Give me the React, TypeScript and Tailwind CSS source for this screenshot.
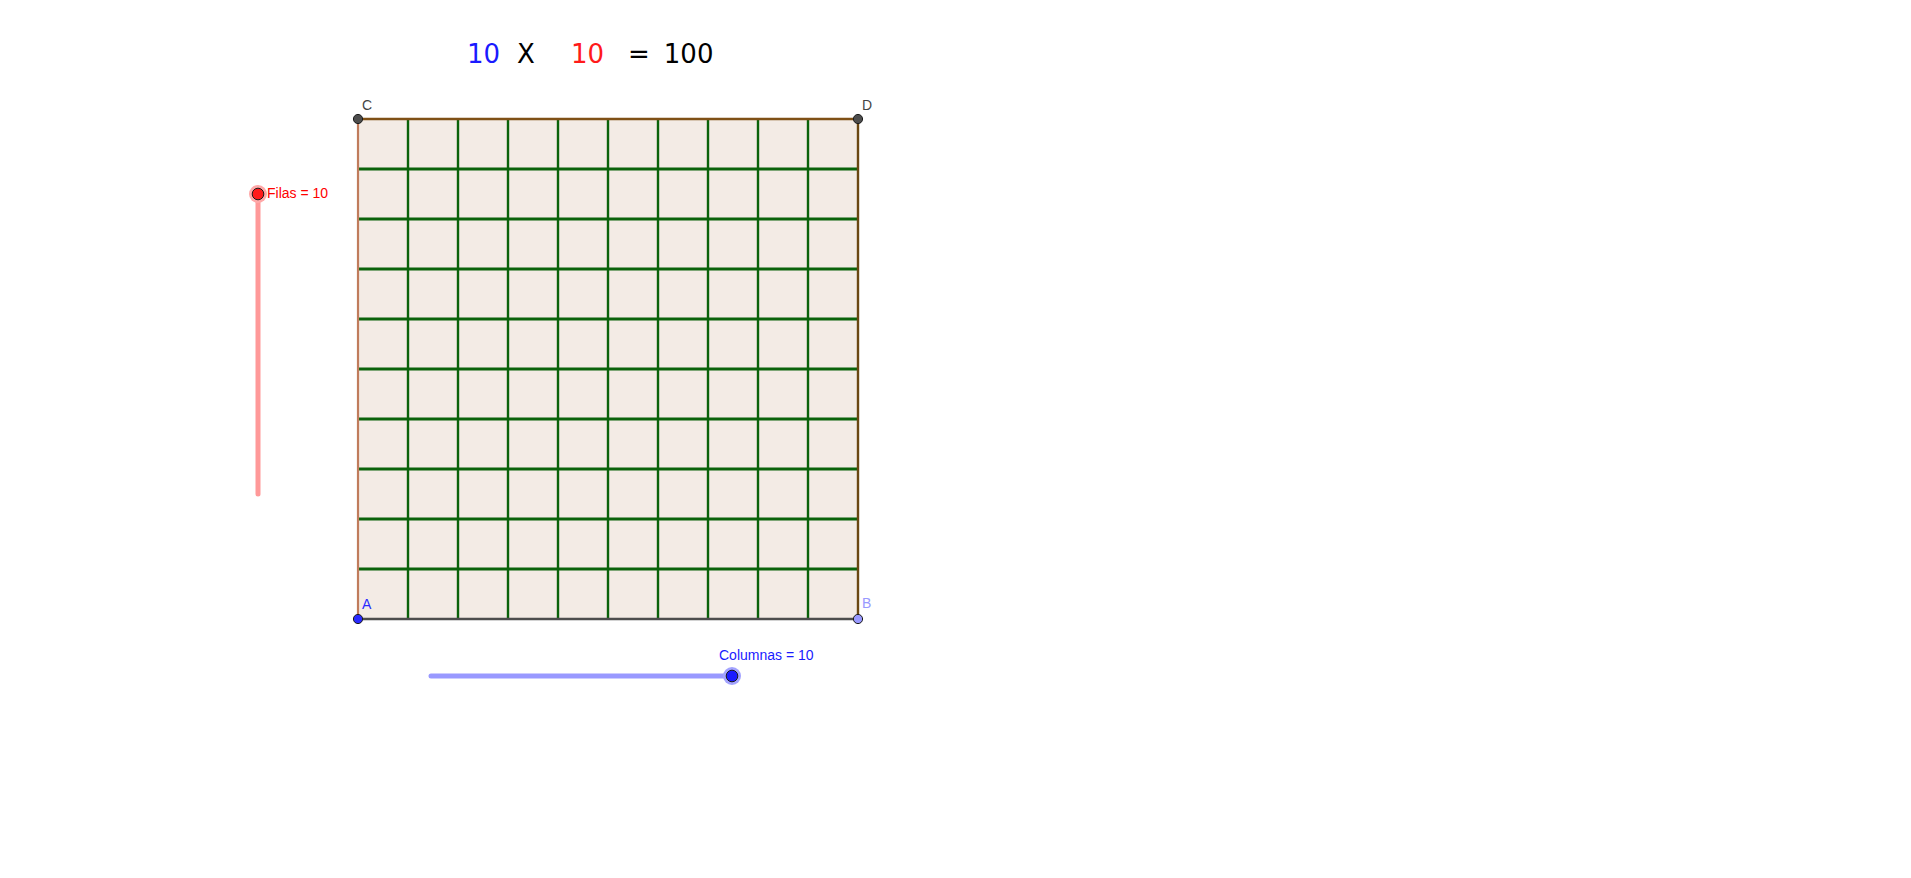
const ROWS = 10;
const COLS = 10;
const LEFT = 358;
const TOP = 119;
const CELL = 50;

function Point({ x, y, fill }: { x: number; y: number; fill: string }) {
  return <circle cx={x} cy={y} r={4.6} fill={fill} stroke="#1a1a1a" strokeWidth={1} />;
}

function Knob({ x, y, halo, fill }: { x: number; y: number; halo: string; fill: string }) {
  return (
    <g>
      <circle cx={x} cy={y} r={9} fill={halo} />
      <circle cx={x} cy={y} r={5.8} fill={fill} stroke="#1a1a1a" strokeWidth={1} />
    </g>
  );
}

function Board() {
  const right = LEFT + COLS * CELL;
  const bottom = TOP + ROWS * CELL;

  return (
    <svg width={1911} height={878} className="block">
      <rect x={LEFT} y={TOP} width={COLS * CELL} height={ROWS * CELL} fill="#f3ebe5" />

      {/* rows */}
      {Array.from({ length: ROWS - 1 }, (_, i) => (
        <line
          key={`r${i}`}
          x1={LEFT}
          x2={right}
          y1={TOP + (i + 1) * CELL}
          y2={TOP + (i + 1) * CELL}
          stroke="#0a620a"
          strokeWidth={2.8}
        />
      ))}

      {/* columns */}
      {Array.from({ length: COLS - 1 }, (_, i) => (
        <line
          key={`c${i}`}
          x1={LEFT + (i + 1) * CELL}
          x2={LEFT + (i + 1) * CELL}
          y1={TOP}
          y2={bottom}
          stroke="#0a620a"
          strokeWidth={2.4}
        />
      ))}

      {/* polygon edges */}
      <line x1={LEFT} x2={LEFT} y1={TOP} y2={bottom} stroke="#c07c5c" strokeWidth={2.2} />
      <line x1={right} x2={right} y1={TOP} y2={bottom} stroke="#6a4712" strokeWidth={2.4} />
      <line x1={LEFT} x2={right} y1={TOP} y2={TOP} stroke="#7f5016" strokeWidth={2.6} />
      <line x1={LEFT} x2={right} y1={bottom} y2={bottom} stroke="#4d4d4d" strokeWidth={2.6} />

      <Point x={LEFT} y={TOP} fill="#4d4d4d" />
      <Point x={right} y={TOP} fill="#4d4d4d" />
      <Point x={LEFT} y={bottom} fill="#2a2aff" />
      <Point x={right} y={bottom} fill="#9999ff" />

      {/* Filas slider */}
      <line x1={258} x2={258} y1={194} y2={494} stroke="#ff9999" strokeWidth={5} strokeLinecap="round" />
      <Knob x={258} y={194} halo="#ffa8a8" fill="#ff1a1a" />

      {/* Columnas slider */}
      <line x1={431} x2={732} y1={676} y2={676} stroke="#9999ff" strokeWidth={5} strokeLinecap="round" />
      <Knob x={732} y={676} halo="#a3a3ff" fill="#1a1aff" />
    </svg>
  );
}

function Label({ className, children }: { className: string; children: React.ReactNode }) {
  return (
    <span className={`absolute whitespace-nowrap text-[14px] leading-none font-['Liberation_Sans',Arial,sans-serif] ${className}`}>
      {children}
    </span>
  );
}

export default function App() {
  return (
    <div className="relative w-[1911px] h-[878px] bg-white overflow-hidden">
      <Board />

      {/* formula */}
      <div className="absolute left-[467px] top-[41px] flex items-baseline text-[26px] leading-none font-['DejaVu_Sans',Verdana,sans-serif]">
        <span className="text-[#1a1aff]">10</span>
        <span className="ml-[17px] text-black">X</span>
        <span className="ml-[36px] text-[#ff1a1a]">10</span>
        <span className="ml-[24px] text-black">=</span>
        <span className="ml-[14px] text-black">100</span>
      </div>

      <Label className="left-[362px] top-[98px] text-[#444444]">C</Label>
      <Label className="left-[862px] top-[98px] text-[#444444]">D</Label>
      <Label className="left-[362px] top-[597px] text-[#2a2aff]">A</Label>
      <Label className="left-[862px] top-[596px] text-[#9999ff]">B</Label>

      <Label className="left-[267px] top-[186px] text-[#ff0000]">Filas = 10</Label>
      <Label className="left-[719px] top-[648px] text-[#1a1aff]">Columnas = 10</Label>
    </div>
  );
}
